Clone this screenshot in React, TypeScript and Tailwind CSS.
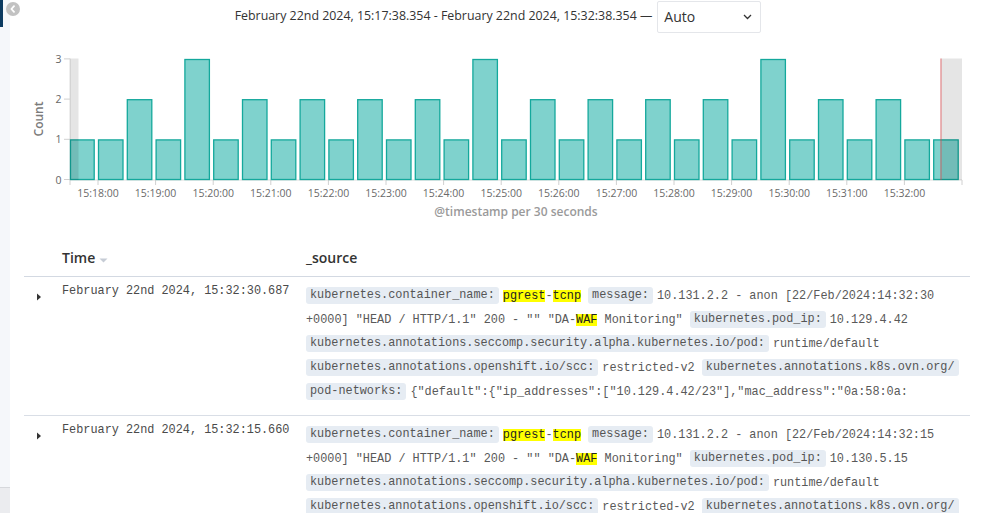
import React from "react";

const VALS = [1, 1, 2, 1, 3, 1, 2, 1, 2, 1, 2, 1, 2, 1, 3, 1, 2, 1, 2, 1, 2, 1, 2, 1, 3, 1, 2, 1, 2, 1, 1];
const Y0 = 179.5;
const UNIT = 40.2;

function Chart() {
  const ticks = Array.from({ length: 15 }, (_, m) => ({
    x: 98 + m * 57.6,
    label: `15:${String(18 + m).padStart(2, "0")}:00`,
  }));
  return (
    <svg width={976} height={200} viewBox="10 34 976 200" className="block shrink-0" style={{ fontFamily: "'Open Sans', sans-serif" }}>
      {/* axes */}
      <line x1={70} y1={58.5} x2={70} y2={180} stroke="#dcdcdc" strokeWidth={1} />
      <line x1={70} y1={180} x2={962} y2={180} stroke="#dcdcdc" strokeWidth={1} />
      {[0, 1, 2, 3].map((v) => (
        <g key={v}>
          <line x1={64} x2={70} y1={Y0 - v * UNIT} y2={Y0 - v * UNIT} stroke="#d0d0d0" />
          <text x={61.5} y={Y0 - v * UNIT} textAnchor="end" dominantBaseline="central" fontSize={10.5} fill="#666">
            {v}
          </text>
        </g>
      ))}
      <line x1={70} x2={70} y1={180} y2={185} stroke="#d0d0d0" />
      <line x1={962} x2={962} y1={180} y2={185} stroke="#d0d0d0" />
      {ticks.map((t) => (
        <g key={t.label}>
          <line x1={t.x} x2={t.x} y1={180} y2={185} stroke="#d0d0d0" />
          <text x={t.x} y={193} textAnchor="middle" dominantBaseline="central" fontSize={10.5} fill="#6a6a6a">
            {t.label}
          </text>
        </g>
      ))}
      {/* bars */}
      {VALS.map((v, k) => {
        const x = Math.max(70.5, 69.7 + k * 28.8);
        const w = 69.7 + k * 28.8 + 24.5 - x;
        const top = Y0 - v * UNIT + 0.6;
        return (
          <rect
            key={k}
            x={x}
            y={top}
            width={w}
            height={Y0 - top}
            fill="#00a69b"
            fillOpacity={0.5}
            stroke="#14a89c"
            strokeWidth={1.3}
          />
        );
      })}
      {/* out-of-range bands */}
      <rect x={70} y={58.5} width={8.5} height={121.5} fill="#000" fillOpacity={0.1} />
      <rect x={940.5} y={58.5} width={21.5} height={121.5} fill="#000" fillOpacity={0.1} />
      <line x1={941} x2={941} y1={58.5} y2={180} stroke="#e0474c" strokeOpacity={0.45} strokeWidth={1.6} />
      {/* axis titles */}
      <text
        x={38}
        y={119}
        transform="rotate(-90 38 119)"
        textAnchor="middle"
        dominantBaseline="central"
        fontSize={12}
        fontWeight={600}
        fill="#7b7b7b"
      >
        Count
      </text>
      <text x={516} y={211} textAnchor="middle" dominantBaseline="central" fontSize={12} fontWeight={600} fill="#9a9a9a">
        @timestamp per 30 seconds
      </text>
    </svg>
  );
}

function Key({ children }: { children: React.ReactNode }) {
  return (
    <span className="inline-block h-[17px] leading-[17px] align-middle px-[4px] mr-[4px] rounded-[3px] bg-[#e6ecf3] text-[#555]">
      {children}
    </span>
  );
}

function Hl({ children }: { children: React.ReactNode }) {
  return <span className="inline-block leading-[12px] bg-[#ffff00] text-[#222]">{children}</span>;
}

function Row({ time, ts, ip }: { time: string; ts: string; ip: string }) {
  return (
    <div className="grid grid-cols-[38px_244px_1fr] border-b border-[#d9dee6] pt-[7px] pb-[11px]">
      <div className="pt-[9px] pl-[12px]">
        <svg width={6} height={8} viewBox="0 0 6 8" className="block">
          <polygon points="1,0.5 5,4 1,7.5" fill="#333" />
        </svg>
      </div>
      <div className="leading-[14px] text-[#4a4a4a]">{time}</div>
      <div className="text-[#595959]">
        <div className="h-[24px] leading-[24px] whitespace-pre">
          <Key>kubernetes.container_name:</Key>
          <Hl>pgrest</Hl>-<Hl>tcnp</Hl> <Key>message:</Key>10.131.2.2 - anon [22/Feb/2024:14:32:{ts}
        </div>
        <div className="h-[24px] leading-[24px] whitespace-pre">
          +0000] "HEAD / HTTP/1.1" 200 - "" "DA-<Hl>WAF</Hl> Monitoring" <Key>kubernetes.pod_ip:</Key>
          {ip}
        </div>
        <div className="h-[24px] leading-[24px] whitespace-pre">
          <Key>kubernetes.annotations.seccomp.security.alpha.kubernetes.io/pod:</Key>runtime/default
        </div>
        <div className="h-[24px] leading-[24px] whitespace-pre">
          <Key>kubernetes.annotations.openshift.io/scc:</Key>restricted-v2 <Key>kubernetes.annotations.k8s.ovn.org/</Key>
        </div>
        <div className="h-[24px] leading-[24px] whitespace-pre">
          <Key>pod-networks:</Key>
          {`{"default":{"ip_addresses":["${ip}/23"],"mac_address":"0a:58:0a:`}
        </div>
      </div>
    </div>
  );
}

export default function App() {
  return (
    <div className="relative flex w-[986px] h-[513px] overflow-hidden bg-white" style={{ fontFamily: "'Open Sans', sans-serif" }}>
      <div className="w-[10px] shrink-0 flex flex-col bg-[#f5f7fa]">
        <div className="h-[27px] border-l-[3px] border-[#0b3a60]" />
        <div className="flex-1" />
        <div className="h-[26px] bg-[#ebecef] border-t border-[#d6d8dc]" />
      </div>
      <button className="absolute left-[6px] top-[2px] w-[14px] h-[14px] rounded-full bg-[#c2c2c2] flex items-center justify-center">
        <svg width={8} height={8} viewBox="0 0 8 8">
          <polyline points="5,1.2 2.4,4 5,6.8" fill="none" stroke="#fff" strokeWidth={1.8} strokeLinecap="round" strokeLinejoin="round" />
        </svg>
      </button>
      <div className="flex-1 flex flex-col min-w-0 overflow-hidden">
        <div className="h-[33px] shrink-0 flex items-center justify-center gap-[5px] text-[#333]">
          <span className="text-[12.4px]">February 22nd 2024, 15:17:38.354 - February 22nd 2024, 15:32:38.354 —</span>
          <div className="h-[32px] w-[104px] border border-[#e4e6ea] rounded-[2px] bg-white flex items-center justify-between pl-[6px] pr-[8px] text-[14px] text-[#333]">
            <span>Auto</span>
            <svg width={9} height={6} viewBox="0 0 9 6">
              <polyline points="1,1 4.5,4.5 8,1" fill="none" stroke="#333" strokeWidth={1.3} />
            </svg>
          </div>
        </div>
        <div className="h-[1px] shrink-0" />
        <Chart />
        <div className="ml-[14px] mr-[16px] shrink-0">
          <div className="grid grid-cols-[38px_244px_1fr] h-[43px] items-end pb-[8px] border-b border-[#d3d9e2] text-[14px] font-semibold text-[#333]">
            <div />
            <div className="flex items-center gap-[4px] leading-[20px]">
              <span>Time</span>
              <svg width={9} height={5} viewBox="0 0 9 5" className="mt-[4px]">
                <polygon points="0.5,0.5 8.5,0.5 4.5,4.5" fill="#c6ccd5" />
              </svg>
            </div>
            <div className="leading-[20px]">_source</div>
          </div>
          <div style={{ fontFamily: "'Liberation Mono', 'Courier New', monospace" }} className="text-[11.85px]">
            <Row time="February 22nd 2024, 15:32:30.687" ts="30" ip="10.129.4.42" />
            <Row time="February 22nd 2024, 15:32:15.660" ts="15" ip="10.130.5.15" />
          </div>
        </div>
      </div>
    </div>
  );
}
